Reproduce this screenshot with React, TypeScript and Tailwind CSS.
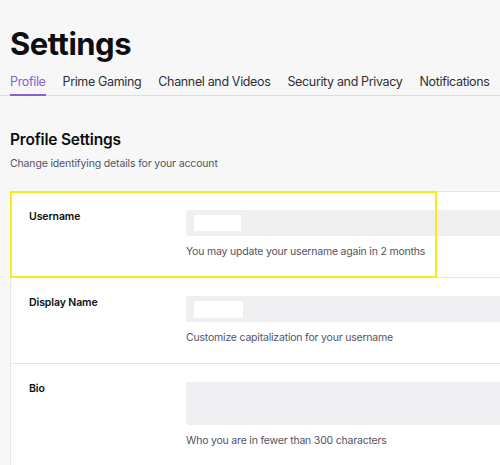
import React from "react";

const tabs = ["Profile", "Prime Gaming", "Channel and Videos", "Security and Privacy", "Notifications"];

function Row({
  label,
  children,
  help,
  last,
}: {
  label: string;
  children: React.ReactNode;
  help: string;
  last?: boolean;
}) {
  return (
    <div className={"flex " + (last ? "" : "border-b border-[#e6e6ea]")}>
      <div className="w-[175px] shrink-0 pl-[18px] pt-[17px] text-[10.5px] font-semibold leading-4 tracking-[-0.1px] text-[#0e0e10]">
        {label}
      </div>
      <div className="flex-1 pt-[18px] pb-[17px]">
        {children}
        <div className="mt-[8px] text-[10.5px] leading-4 tracking-[-0.2px] text-[#53535f]">{help}</div>
      </div>
    </div>
  );
}

export default function App() {
  return (
    <div className="w-[500px] h-[465px] overflow-hidden bg-[#f7f7f8] font-['Inter',sans-serif]">
      <h1 className="pl-[10px] pt-[24px] text-[31px] font-bold leading-[40px] tracking-[-0.5px] text-[#0e0e10]">
        Settings
      </h1>
      <nav className="mt-[8px] flex gap-[17px] border-b border-[#dcdce0] pl-[10px]">
        {tabs.map((t, i) => (
          <div
            key={t}
            className={
              "whitespace-nowrap pb-[2px] text-[12.5px] leading-[20px] tracking-[-0.35px] " +
              (i === 0 ? "border-b-2 border-[#8a5fcf] text-[#8a5fcf] -mb-px" : "text-[#2f2f35]")
            }
          >
            {t}
          </div>
        ))}
      </nav>
      <h2 className="mt-[32px] pl-[10px] text-[15.5px] font-semibold leading-6 tracking-[-0.2px] text-[#0e0e10]">
        Profile Settings
      </h2>
      <p className="mt-[4px] pl-[10px] text-[10.5px] leading-4 tracking-[-0.15px] text-[#53535f]">
        Change identifying details for your account
      </p>
      <div className="relative ml-[10px] mt-[19px] w-[560px] border border-[#e6e6ea] bg-white">
        <Row label="Username" help="You may update your username again in 2 months">
          <div className="flex h-[26px] items-center rounded-[3px] bg-[#efeff1] pl-[8px]">
            <div className="h-[16px] w-[47px] bg-white" />
          </div>
        </Row>
        <Row label="Display Name" help="Customize capitalization for your username">
          <div className="flex h-[26px] items-center rounded-[3px] bg-[#efeff1] pl-[8px]">
            <div className="h-[17px] w-[49px] bg-white" />
          </div>
        </Row>
        <Row label="Bio" help="Who you are in fewer than 300 characters" last>
          <div className="h-[43px] rounded-[3px] bg-[#efeff1]" />
        </Row>
        <div className="pointer-events-none absolute -left-px -top-px h-[87px] w-[427px] border-[2px] border-[#f8ec17]" />
      </div>
    </div>
  );
}
